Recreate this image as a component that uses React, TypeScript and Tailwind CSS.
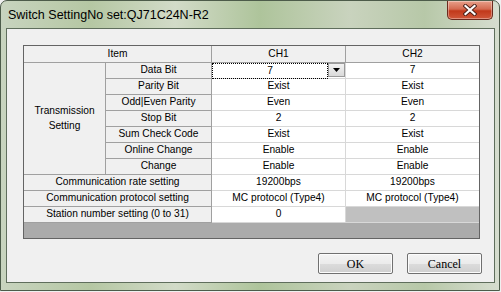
import React from 'react';

const labelCell =
  'flex items-center justify-center bg-[#f0f0f0] border-r border-b border-[#a0a0a0] leading-none';
const dataCell =
  'flex items-center justify-center bg-white border-r border-b border-[#d8d8d8] leading-none';
const lastDataCell =
  'flex items-center justify-center bg-white border-b border-[#d8d8d8] leading-none';

const subRows = [
  { label: 'Parity Bit', ch1: 'Exist', ch2: 'Exist' },
  { label: 'Odd|Even Parity', ch1: 'Even', ch2: 'Even' },
  { label: 'Stop Bit', ch1: '2', ch2: '2' },
  { label: 'Sum Check Code', ch1: 'Exist', ch2: 'Exist' },
  { label: 'Online Change', ch1: 'Enable', ch2: 'Enable' },
  { label: 'Change', ch1: 'Enable', ch2: 'Enable' },
];

function CloseButton() {
  return (
    <div className="w-[46px] h-[19px] rounded-b-[5px] border border-t-0 border-[#6b2a1e] bg-[linear-gradient(180deg,#e8a08a_0%,#d46a50_45%,#c2391b_55%,#d0573a_100%)] flex items-center justify-center shadow-[inset_0_0_0_1px_rgba(255,255,255,0.35)]">
      <svg width="14" height="12" viewBox="0 0 14 12">
        <path d="M2.5 2 L11.5 10 M11.5 2 L2.5 10" stroke="#4a2018" strokeWidth="4" strokeLinecap="square" />
        <path d="M2.5 2 L11.5 10 M11.5 2 L2.5 10" stroke="#ffffff" strokeWidth="2.2" strokeLinecap="square" />
      </svg>
    </div>
  );
}

function DialogButton({ label }: { label: string }) {
  return (
    <button className="w-[75px] h-[21px] border border-[#707070] rounded-[2px] bg-[linear-gradient(180deg,#f4f4f4_0%,#ebebeb_50%,#dcdcdc_51%,#cfcfcf_100%)] shadow-[inset_0_0_0_1px_#fcfcfc] text-[12px] text-black font-['Liberation_Serif',serif] leading-none">
      {label}
    </button>
  );
}

export default function App() {
  return (
    <div className="w-[501px] h-[292px] overflow-hidden bg-[#f0f0f0]">
      <div className="w-[500px] h-[291px] flex flex-col rounded-t-[7px] border border-[#4d5c4a] bg-[linear-gradient(90deg,#c8d4bf_0%,#b5c7a3_18%,#d2dbc8_35%,#aec49b_52%,#c9d3be_70%,#b7c8a8_85%,#d6ddcf_100%)]">
        {/* Title bar */}
        <div className="h-[27px] flex items-start justify-between pl-[7px] pr-[6px]">
          <span className="pt-[8px] text-[12.5px] leading-none text-black font-['Liberation_Sans',sans-serif]">
            Switch SettingNo set:QJ71C24N-R2
          </span>
          <CloseButton />
        </div>

        {/* Client area */}
        <div className="ml-[5px] mr-[4px] mb-[7px] flex-1 border border-[#5f6e5c] bg-[#f0f0f0] flex flex-col pl-[16px] pt-[16px] font-['Liberation_Sans',sans-serif] text-[10.2px] text-black">
          <div className="w-[457px] border border-[#646464] grid grid-cols-[82px_106px_134px_133px] grid-rows-[17px_repeat(10,16px)_15px]">
            {/* Header */}
            <div className={`${labelCell} col-span-2`}>Item</div>
            <div className={labelCell}>CH1</div>
            <div className="flex items-center justify-center bg-[#f0f0f0] border-b border-[#a0a0a0] leading-none">CH2</div>

            {/* Transmission setting group */}
            <div className={`${labelCell} row-span-7 flex-col gap-[5px] text-center`}>
              <span>Transmission</span>
              <span>Setting</span>
            </div>
            <div className={labelCell}>Data Bit</div>
            <div className="flex bg-white border-r border-b border-[#d8d8d8]">
              <div className="flex-1 flex items-center justify-center border border-dotted border-black -mb-px leading-none">7</div>
              <div className="w-[17px] h-[14px] bg-[linear-gradient(180deg,#f2f2f2,#dadada)] border border-[#9a9a9a] flex items-center justify-center">
                <svg width="7" height="4" viewBox="0 0 7 4">
                  <path d="M0 0 H7 L3.5 4 Z" fill="#000" />
                </svg>
              </div>
            </div>
            <div className={lastDataCell}>7</div>

            {subRows.map((row) => (
              <React.Fragment key={row.label}>
                <div className={labelCell}>{row.label}</div>
                <div className={dataCell}>{row.ch1}</div>
                <div className={lastDataCell}>{row.ch2}</div>
              </React.Fragment>
            ))}

            {/* Full-width rows */}
            <div className={`${labelCell} col-span-2`}>Communication rate setting</div>
            <div className={dataCell}>19200bps</div>
            <div className={lastDataCell}>19200bps</div>

            <div className={`${labelCell} col-span-2`}>Communication protocol setting</div>
            <div className={dataCell}>MC protocol (Type4)</div>
            <div className={lastDataCell}>MC protocol (Type4)</div>

            <div className={`${labelCell} col-span-2`}>Station number setting (0 to 31)</div>
            <div className={dataCell}>0</div>
            <div className="bg-[#c0c0c0] border-b border-[#d8d8d8]" />

            {/* Empty strip */}
            <div className="col-span-4 bg-[#ababab]" />
          </div>

          <div className="flex justify-end gap-[14px] mt-[14px] pr-[12px]">
            <DialogButton label="OK" />
            <DialogButton label="Cancel" />
          </div>
        </div>
      </div>
    </div>
  );
}
